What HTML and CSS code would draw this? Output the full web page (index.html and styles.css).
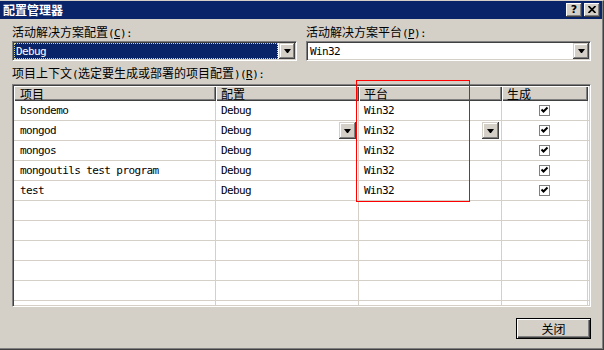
FILE: index.html
```html
<!DOCTYPE html>
<html>
<head>
<meta charset="utf-8">
<title>配置管理器</title>
<link rel="stylesheet" href="styles.css">
</head>
<body>
<div class="dialog">
	<div class="titlebar">
		<span class="title">配置管理器</span>
		<span class="tb_btns">
			<span class="tb_btn">?</span>
			<span class="tb_btn"><svg width="8" height="7" viewBox="0 0 8 7"><path d="M0.5 0 L7.5 7 M7.5 0 L0.5 7" stroke="#000" stroke-width="1.7" fill="none"/></svg></span>
		</span>
	</div>
	<div class="content">
		<div class="fields">
			<div class="field">
				<label>活动解决方案配置<span class="asc">(<u>C</u>):</span></label>
				<div class="combo">
					<span class="combo_text sel mono">Debug</span>
					<span class="drop"><i class="arrow"></i></span>
				</div>
			</div>
			<div class="field">
				<label>活动解决方案平台<span class="asc">(<u>P</u>):</span></label>
				<div class="combo">
					<span class="combo_text mono">Win32</span>
					<span class="drop"><i class="arrow"></i></span>
				</div>
			</div>
		</div>
		<label class="ctx">项目上下文<span class="asc">(</span>选定要生成或部署的项目配置<span class="asc">)(<u>R</u>):</span></label>
		<div class="grid">
			<div class="grid_in">
				<div class="row head">
					<div class="c1">项目</div>
					<div class="c2">配置</div>
					<div class="c3">平台</div>
					<div class="c4">生成</div>
					<div class="fill"></div>
				</div>
				<div class="row">
					<div class="c1 mono">bsondemo</div>
					<div class="c2 mono">Debug</div>
					<div class="c3 mono">Win32</div>
					<div class="c4 chk"><svg width="11" height="11" viewBox="0 0 11 11"><rect x="0.5" y="0.5" width="10" height="10" fill="#fff" stroke="#808080"/><path d="M2.5 4.5 L4.5 6.5 L8.5 2.5" stroke="#000" stroke-width="2" fill="none"/></svg></div>
					<div class="fill"></div>
				</div>
				<div class="row">
					<div class="c1 mono">mongod</div>
					<div class="c2 mono">Debug<span class="drop cell_drop"><i class="arrow"></i></span></div>
					<div class="c3 mono">Win32<span class="drop cell_drop"><i class="arrow"></i></span></div>
					<div class="c4 chk"><svg width="11" height="11" viewBox="0 0 11 11"><rect x="0.5" y="0.5" width="10" height="10" fill="#fff" stroke="#808080"/><path d="M2.5 4.5 L4.5 6.5 L8.5 2.5" stroke="#000" stroke-width="2" fill="none"/></svg></div>
					<div class="fill"></div>
				</div>
				<div class="row">
					<div class="c1 mono">mongos</div>
					<div class="c2 mono">Debug</div>
					<div class="c3 mono">Win32</div>
					<div class="c4 chk"><svg width="11" height="11" viewBox="0 0 11 11"><rect x="0.5" y="0.5" width="10" height="10" fill="#fff" stroke="#808080"/><path d="M2.5 4.5 L4.5 6.5 L8.5 2.5" stroke="#000" stroke-width="2" fill="none"/></svg></div>
					<div class="fill"></div>
				</div>
				<div class="row">
					<div class="c1 mono">mongoutils test program</div>
					<div class="c2 mono">Debug</div>
					<div class="c3 mono">Win32</div>
					<div class="c4 chk"><svg width="11" height="11" viewBox="0 0 11 11"><rect x="0.5" y="0.5" width="10" height="10" fill="#fff" stroke="#808080"/><path d="M2.5 4.5 L4.5 6.5 L8.5 2.5" stroke="#000" stroke-width="2" fill="none"/></svg></div>
					<div class="fill"></div>
				</div>
				<div class="row">
					<div class="c1 mono">test</div>
					<div class="c2 mono">Debug</div>
					<div class="c3 mono">Win32</div>
					<div class="c4 chk"><svg width="11" height="11" viewBox="0 0 11 11"><rect x="0.5" y="0.5" width="10" height="10" fill="#fff" stroke="#808080"/><path d="M2.5 4.5 L4.5 6.5 L8.5 2.5" stroke="#000" stroke-width="2" fill="none"/></svg></div>
					<div class="fill"></div>
				</div>
				<div class="row"><div class="c1"></div><div class="c2"></div><div class="c3"></div><div class="c4"></div><div class="fill"></div></div>
				<div class="row"><div class="c1"></div><div class="c2"></div><div class="c3"></div><div class="c4"></div><div class="fill"></div></div>
				<div class="row"><div class="c1"></div><div class="c2"></div><div class="c3"></div><div class="c4"></div><div class="fill"></div></div>
				<div class="row"><div class="c1"></div><div class="c2"></div><div class="c3"></div><div class="c4"></div><div class="fill"></div></div>
				<div class="row"><div class="c1"></div><div class="c2"></div><div class="c3"></div><div class="c4"></div><div class="fill"></div></div>
				<div class="row"><div class="c1"></div><div class="c2"></div><div class="c3"></div><div class="c4"></div><div class="fill"></div></div>
			</div>
		</div>
		<div class="footer">
			<span class="btn">关闭</span>
		</div>
	</div>
	<div class="mark"></div>
</div>
</body>
</html>
```

FILE: styles.css
```css
*{ margin:0; padding:0; box-sizing:border-box;}
body{ font:12px "Noto Sans CJK SC", sans-serif; color:#000; background:#d4d0c8;}
label{ display:block; height:16px; line-height:16px; white-space:nowrap; overflow:hidden;}
.asc,.mono{ font-family:"DejaVu Sans Mono", monospace; font-size:11px; letter-spacing:-0.6px;}
.asc{ line-height:1;}

.dialog{ position:relative; width:604px; height:350px; background:#d4d0c8; border-top:1px solid #d4d0c8; border-right:1px solid #404040; border-bottom:1px solid #404040; box-shadow:inset -1px -1px #808080; display:flex; flex-direction:column;}

/* title bar */
.titlebar{ height:18px; flex:none; margin-right:1px; background:#0a246a; display:flex; align-items:center; justify-content:space-between; padding:0 2px 0 3px;}
.title{ color:#fff; font-weight:bold; line-height:18px;}
.tb_btns{ display:flex; gap:2px;}
.tb_btn{ width:16px; height:14px; background:#d4d0c8; box-shadow:inset -1px -1px #404040, inset 1px 1px #fff, inset -2px -2px #808080; display:flex; align-items:center; justify-content:center; font:bold 11px "DejaVu Sans", sans-serif; line-height:14px; padding-bottom:1px;}

.content{ flex:1; display:flex; flex-direction:column; padding:5px 12px 0 12px;}
.fields{ display:flex; gap:9px;}
.field{ flex:1; min-width:0;}

/* combo box */
.combo{ margin-top:1px; height:20px; display:flex; background:#fff; border:1px solid; border-color:#808080 #fff #fff #808080; box-shadow:inset 1px 1px #404040, inset -1px -1px #d4d0c8; padding:1px;}
.combo_text{ flex:1; display:flex; align-items:center; padding-left:2px; margin-right:1px;}
.combo_text.sel{ background:#0a246a; color:#fff; outline:1px dotted #d8d890; outline-offset:-1px;}
.drop{ flex:none; width:16px; height:16px; background:#d4d0c8; box-shadow:inset -1px -1px #404040, inset 1px 1px #d4d0c8, inset -2px -2px #808080, inset 2px 2px #fff; display:flex; align-items:center; justify-content:center;}
.arrow{ width:1px; height:0; border-left:3px solid transparent; border-right:3px solid transparent; border-top:4px solid #000; box-sizing:content-box;}

.ctx{ margin-top:4px;}

/* grid */
.grid{ flex:none; margin-top:3px; height:223px; background:#fff; border:1px solid; border-color:#808080 #fff #fff #808080; box-shadow:inset 1px 1px #404040, inset -1px -1px #d4d0c8; padding:1px;}
.grid_in{ height:100%; overflow:hidden;}
.row{ display:flex; height:20px; border-bottom:1px solid #d4d0c8;}
.row > div{ flex:none; display:flex; align-items:center; padding-left:5px; border-right:1px solid #d4d0c8; white-space:nowrap;}
.row .c1{ width:202px; padding-left:6px;}
.row .c2{ width:143px;}
.row .c3{ width:143px;}
.row .c4{ width:86px;}
.row .fill{ flex:1; border-right:none; padding:0;}
.row .chk{ justify-content:center; padding:0;}
.cell_drop{ width:17px; height:17px; margin-left:auto; margin-right:2px;}

.row.head{ height:15px; border-bottom:none;}
.row.head > div{ background:#d4d0c8; border-right:none; box-shadow:inset 1px 1px #fff, inset -1px -1px #404040, inset -2px -2px #808080; line-height:15px;}

.footer{ display:flex; justify-content:flex-end; margin-top:11px;}
.btn{ width:75px; height:21px; border:1px solid #000; background:#d4d0c8; box-shadow:inset 1px 1px #fff, inset -1px -1px #404040, inset -2px -2px #808080; display:flex; align-items:center; justify-content:center;}

/* red highlight box */
.mark{ position:absolute; left:356px; top:79px; width:114px; height:122px; border:1px solid #f00;}
```
